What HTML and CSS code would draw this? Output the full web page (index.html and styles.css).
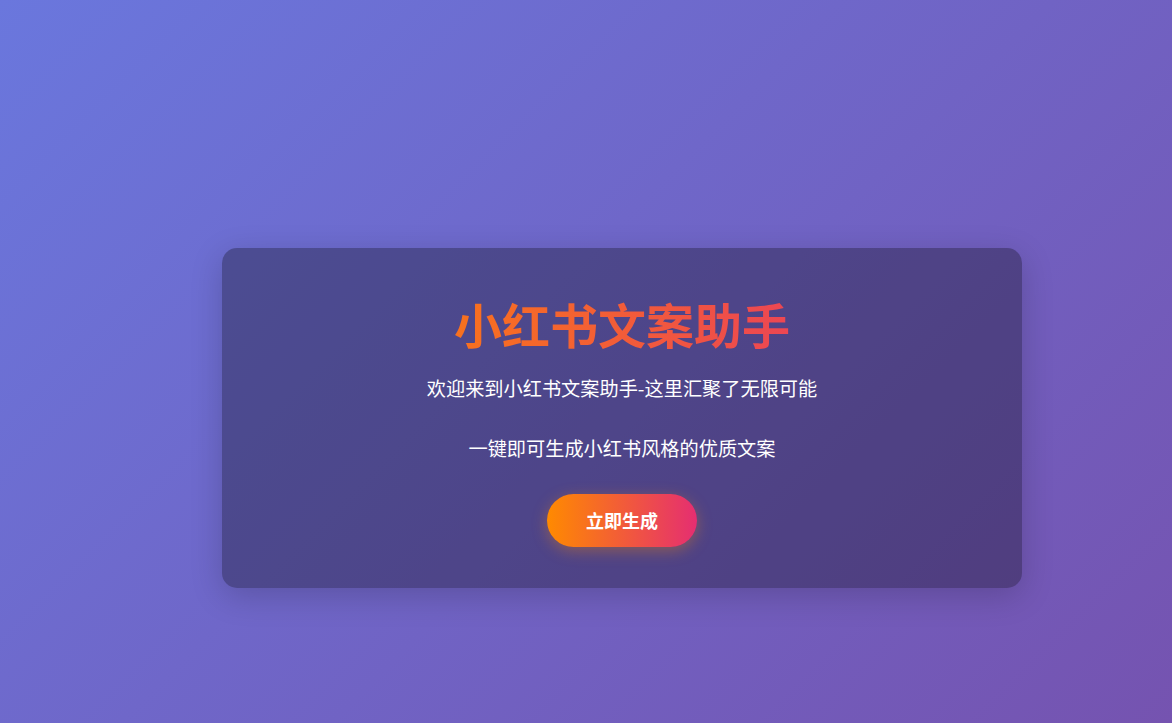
FILE: index.html
```html
<!DOCTYPE html>
<html lang="zh-CN">
<head>
<meta charset="UTF-8">
<title>小红书文案助手</title>
<link rel="stylesheet" href="styles.css">
</head>
<body>
<main class="page">
  <section class="card">
    <h1 class="title">小红书文案助手</h1>
    <p class="subtitle">欢迎来到小红书文案助手-这里汇聚了无限可能</p>
    <p class="subtitle">一键即可生成小红书风格的优质文案</p>
    <button class="cta" type="button">立即生成</button>
  </section>
</main>
</body>
</html>
```
FILE: styles.css
```css
* { box-sizing: border-box; }
html, body { margin: 0; padding: 0; height: 100%; }
body {
  font-family: "Noto Sans CJK SC", "Noto Sans", sans-serif;
  background: linear-gradient(135deg, #6a77dd 0%, #7553b0 100%);
  color: #fff;
  overflow: hidden;
}
.page {
  height: 723px;
  display: flex;
  align-items: flex-start;
  justify-content: flex-start;
  padding: 248px 0 0 222px;
}
.card {
  width: 800px;
  padding: 40px 40px 41px;
  border-radius: 15px;
  background: rgba(0, 0, 0, 0.3);
  box-shadow: 0 8px 32px rgba(0, 0, 0, 0.18);
  text-align: center;
}
.title {
  margin: 0 0 16px;
  font-size: 48px;
  font-weight: 700;
  background: linear-gradient(90deg, #ff8a00, #e52e71);
  -webkit-background-clip: text;
  background-clip: text;
  color: transparent;
}
.subtitle {
  margin: 0 0 32px;
  font-size: 19.2px;
  line-height: 28px;
  color: #fff;
}
.subtitle + .subtitle { margin-top: 1px; }
.cta {
  display: inline-block;
  border: none;
  border-radius: 27px;
  padding: 15px 39px;
  font-family: inherit;
  font-size: 18px;
  line-height: 23px;
  font-weight: 700;
  color: #fff;
  background: linear-gradient(90deg, #ff8a00, #e52e71);
  box-shadow: 0 4px 15px rgba(255, 138, 0, 0.35);
  cursor: pointer;
}
```
